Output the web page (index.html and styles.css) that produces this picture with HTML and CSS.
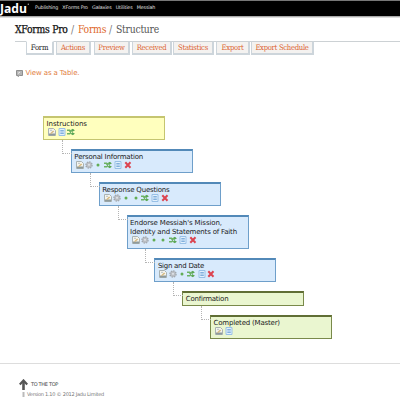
FILE: index.html
```
<!DOCTYPE html>
<html lang="en">
<head>
<meta charset="utf-8">
<title>XForms Pro</title>
<link rel="stylesheet" href="styles.css">
</head>
<body>
<svg class="defs" aria-hidden="true">
  <symbol id="edit" viewBox="0 0 8 8"><path d="M.5 .5h5l2 2v5h-7z" fill="#f4f4ee" stroke="#a9b2b2"/><path d="M1 5.500h6v2H1z" fill="#8f9a9a"/><path d="M2 5.500l3-3 1.200 1-3 2.500z" fill="#d5b980"/><path d="M2 2.300h2" stroke="#b8c0c2"/></symbol>
  <symbol id="gear" viewBox="0 0 8 8"><circle cx="4" cy="4" r="2.900" fill="#b9bdc2"/><circle cx="4" cy="4" r="3.100" fill="none" stroke="#9fa4aa" stroke-width="1.200" stroke-dasharray="1.500 .9"/><circle cx="4" cy="3.800" r="1.100" fill="#dde1e5"/></symbol>
  <symbol id="dot" viewBox="0 0 8 8"><circle cx="4" cy="4" r="1.500" fill="#62ad55"/></symbol>
  <symbol id="branch" viewBox="0 0 8 8"><path d="M0 2.300h2.500l2 3.400H7M0 5.700h2.500l2-3.400H7" fill="none" stroke="#6db265" stroke-width="1.600"/><path d="M5 .7L8 2.300 5 4zM5 4L8 5.700 5 7.300z" fill="#5ba655"/></symbol>
  <symbol id="page" viewBox="0 0 8 8"><path d="M1 .5h6v7H1z" fill="#e2f0fc" stroke="#98c0e6"/><path d="M2.300 2.500h3.500M2.300 4h3.500M2.300 5.500h3.500" stroke="#6a9fd4" stroke-width=".8"/></symbol>
  <symbol id="cross" viewBox="0 0 8 8"><path d="M1.300 1.300l5.200 5.400M6.500 1.300L1.300 6.700" stroke="#dc4450" stroke-width="2"/></symbol>
</svg>

<header class="topbar">
  <svg class="logo" width="30" height="15"><text x="0" y="11.500" textLength="27" lengthAdjust="spacingAndGlyphs">Jadu</text><circle cx="28.300" cy="3.200" r=".7" fill="#aaa"/></svg>
  <nav class="menu"><span>Publishing</span><span>XForms Pro</span><span>Galaxies</span><span>Utilities</span><span>Messiah</span></nav>
</header>

<h1 class="crumbs"><b>XForms Pro</b><i>/</i><a>Forms</a><i>/</i><span>Structure</span></h1>

<nav class="tabs">
  <a class="tab active t1">Form</a><a class="tab t2">Actions</a><a class="tab t3">Preview</a><a class="tab t4">Received</a><a class="tab t5">Statistics</a><a class="tab t6">Export</a><a class="tab t7">Export Schedule</a>
</nav>

<div class="view"><svg width="7" height="7" viewBox="0 0 7 7"><path d="M.5 .5h6v5h-3l-1.500 1v-1h-1.500z" fill="#b5b5b5" stroke="#8f8f8f"/><path d="M2 3.500l2-1.500" stroke="#eee"/></svg><a>View as a Table.</a></div>

<ul class="tree">
  <li><div class="node yellow"><p class="s1">Instructions</p><div class="icons wide"><svg><use href="#edit"/></svg><svg><use href="#page"/></svg><svg><use href="#branch"/></svg></div></div>
  <ul><li><div class="node blue"><p>Personal Information</p><div class="icons"><svg><use href="#edit"/></svg><svg><use href="#gear"/></svg><svg><use href="#dot"/></svg><svg><use href="#branch"/></svg><svg class="gap"><use href="#page"/></svg><svg><use href="#cross"/></svg></div></div>
  <ul><li><div class="node blue"><p>Response Questions</p><div class="icons"><svg><use href="#edit"/></svg><svg><use href="#gear"/></svg><svg><use href="#dot"/></svg><svg><use href="#dot"/></svg><svg><use href="#branch"/></svg><svg class="gap"><use href="#page"/></svg><svg><use href="#cross"/></svg></div></div>
  <ul><li><div class="node blue tall"><p><span class="s4">Endorse Messiah's Mission,</span><br>Identity and Statements of Faith</p><div class="icons"><svg><use href="#edit"/></svg><svg><use href="#gear"/></svg><svg><use href="#dot"/></svg><svg><use href="#dot"/></svg><svg><use href="#branch"/></svg><svg class="gap"><use href="#page"/></svg><svg><use href="#cross"/></svg></div></div>
  <ul><li><div class="node blue"><p class="s5">Sign and Date</p><div class="icons"><svg><use href="#edit"/></svg><svg><use href="#gear"/></svg><svg><use href="#dot"/></svg><svg><use href="#branch"/></svg><svg class="gap"><use href="#page"/></svg><svg><use href="#cross"/></svg></div></div>
  <ul><li><div class="node green short"><p class="s6">Confirmation</p></div>
  <ul><li><div class="node green"><p>Completed (Master)</p><div class="icons wide"><svg><use href="#edit"/></svg><svg><use href="#page"/></svg></div></div></li></ul>
  </li></ul></li></ul></li></ul></li></ul></li></ul></li>
</ul>

<footer class="footer">
  <svg class="arrow" width="9" height="19" viewBox="0 0 9 19"><path d="M4.500 2.500v8.500" stroke="#555" stroke-width="2.600"/><path d="M.8 5.500l3.700-4 3.700 4" fill="none" stroke="#555" stroke-width="2.200"/><path d="M4.500 13v5" stroke="#bbb" stroke-width="2"/></svg>
  <div><p class="top">TO THE TOP</p><p class="version">Version 1.10 © 2012 Jadu Limited</p></div>
</footer>
</body>
</html>
```
FILE: styles.css
```
* { box-sizing: border-box; }
body { margin: 0; width: 400px; height: 400px; overflow: hidden; background: #fff; font-family: "DejaVu Sans", sans-serif; }
p, ul, h1 { margin: 0; padding: 0; }
ul { list-style: none; }
.defs { display: none; }

.topbar { display: flex; height: 17px; background: #000; border-top: 1px solid #777; border-bottom: 1px solid #aaa; box-shadow: 0 1px 0 #ddd; }
.logo text { font: bold 12.500px "Open Sans", sans-serif; fill: #fff; }
.menu { display: flex; gap: 4.200px; margin-left: 5px; color: #e4e4e4; font-size: 4.800px; line-height: 14px; letter-spacing: -.14px; white-space: nowrap; }

.crumbs { display: flex; margin: 4px 0 0 15px; height: 16px; font: 10.300px/16px "DejaVu Serif Condensed", "DejaVu Serif", serif; letter-spacing: -.25px; white-space: nowrap; color: #555; }
.crumbs b { width: 56px; font-weight: 400; color: #111; -webkit-text-stroke: .25px #111; }
.crumbs i { width: 7px; font-style: normal; color: #777; }
.crumbs a { width: 31px; color: #e0692c; }

.tabs { display: flex; align-items: flex-start; margin-top: 4px; padding-left: 15px; height: 15px; background: linear-gradient(#ccd1d4, #ccd1d4) 15px 0 / 385px 1px no-repeat; }
.tab { height: 14px; padding-top: 1px; border: 1px solid #cdd5db; border-top-color: #ccd1d4; border-right-width: 2px; border-bottom-width: 2px; background: #f4f2f0; color: #dc6431; text-align: center; font: 7.600px/10px "DejaVu Serif Condensed", "DejaVu Serif", serif; letter-spacing: -.22px; white-space: nowrap; }
.tab.active { margin-left: 11px; background: #fff; border-top-color: #fff; color: #222; }
.t1 { width: 28px; }
.t2 { width: 35px; margin-left: 2px; }
.t3 { width: 36px; margin-left: 3px; }
.t4 { width: 40px; margin-left: 2px; }
.t5 { width: 41px; margin-left: 1px; }
.t6 { width: 34px; margin-left: 2px; }
.tab.t7 { width: 63px; margin-left: 1px; letter-spacing: -.28px; }

.view { display: flex; align-items: center; gap: 2.500px; margin: 12px 0 0 16px; height: 10px; color: #df7d3d; font-size: 7px; letter-spacing: -.12px; }

.tree { margin: 38px 0 0 43px; height: 223px; }
.tree ul { margin: 9px 0 0 27.850px; }
.tree ul > li { position: relative; }
.tree ul > li::before { content: ""; position: absolute; left: -9px; top: -9px; width: 9px; height: 13px; border-left: 1px dotted #b4b4b4; border-bottom: 1px dotted #b4b4b4; }
.node { width: 122px; height: 24px; border: 1px solid; border-top-width: 2px; padding: 2px 0 0 2.500px; font-size: 7px; line-height: 9px; letter-spacing: -.19px; color: #222; white-space: nowrap; }
.yellow { background: #ffffbe; border-color: #c5c570; }
.blue { background: #d8eafc; border-color: #6e9fca; border-top-color: #5289b8; }
.green { background: #eaf6d0; border-color: #79894a; border-top-color: #606e35; }
.tall { height: 34px; }
.short { height: 15px; }
.s1 { letter-spacing: -.06px; }
.s4 { letter-spacing: -.12px; }
.s5 { letter-spacing: -.26px; }
.s6 { letter-spacing: -.22px; }
.icons { display: flex; gap: 1.300px; margin: -1px 0 0 1.500px; height: 8px; }
.icons svg { flex: none; width: 8px; height: 8px; }
.icons.wide { gap: 1.500px; }
.icons .gap { margin-left: 1.300px; }

.footer { display: flex; gap: 3px; margin-top: 24px; padding: 15px 0 0 19px; border-top: 1px solid #ddd; color: #444; font-size: 5px; line-height: 10px; }
.arrow { flex: none; }
.top { letter-spacing: -.32px; }
.version { margin-left: -4px; letter-spacing: -.24px; color: #777; white-space: nowrap; }
```
